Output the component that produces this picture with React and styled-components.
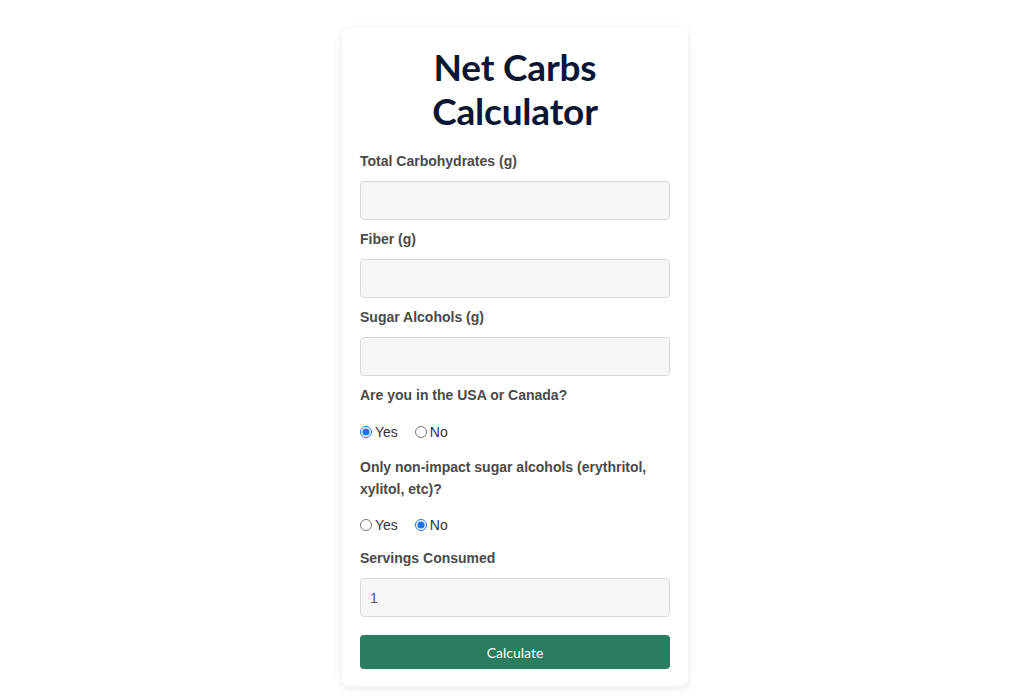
import React, { useState } from 'react'
import styled, { createGlobalStyle } from 'styled-components'

const GlobalStyle = createGlobalStyle`
  html, body {
    margin: 0;
    padding: 0;
    background: #ffffff;
  }
  body {
    font-family: "Liberation Sans", Arial, sans-serif;
  }
`

const Page = styled.div`
  display: flex;
  justify-content: center;
  padding: 28px 0 12px 6px;
`

const Card = styled.div`
  width: 346px;
  box-sizing: border-box;
  padding: 17px 18px 17px;
  background: #fff;
  border-radius: 8px;
  box-shadow: 0 2px 10px rgba(0, 0, 0, 0.1);
`

const Title = styled.h1`
  margin: 0 0 17px;
  text-align: center;
  font-family: Lato, "Open Sans", sans-serif;
  font-weight: 700;
  font-size: 37px;
  line-height: 44px;
  color: #0a1633;
  letter-spacing: -0.2px;
`

const Label = styled.label`
  display: block;
  margin-bottom: 9px;
  font-size: 14px;
  font-weight: 700;
  line-height: 22px;
  color: #4a4a4a;
`

const Input = styled.input`
  display: block;
  width: 100%;
  box-sizing: border-box;
  height: 39px;
  margin: 0 0 8px;
  padding: 0 9px;
  border: 1px solid #d9d9d9;
  border-radius: 4px;
  background: #f6f6f6;
  font-family: "Liberation Sans", Arial, sans-serif;
  font-size: 14px;
  color: #555;
  outline: none;
`

const RadioRow = styled.div`
  display: flex;
  align-items: center;
  gap: 17px;
  height: 22px;
  margin: ${p => p.$top}px 0 ${p => p.$bottom}px;
`

const RadioOption = styled.label`
  display: flex;
  align-items: center;
  font-size: 14px;
  color: #333;
  cursor: pointer;

  input {
    width: 12px;
    height: 12px;
    margin: 0 3px 0 0;
    accent-color: #1a73e8;
  }
`

const Button = styled.button`
  display: block;
  width: 100%;
  height: 34px;
  margin-top: 18px;
  border: none;
  border-radius: 4px;
  background: #2a7d5f;
  color: #fff;
  font-family: Lato, "Open Sans", sans-serif;
  font-size: 14px;
  cursor: pointer;
`

function RadioGroup({ name, value, onChange, top, bottom }) {
  return (
    <RadioRow $top={top} $bottom={bottom}>
      <RadioOption>
        <input type="radio" name={name} checked={value === 'yes'} onChange={() => onChange('yes')} />
        Yes
      </RadioOption>
      <RadioOption>
        <input type="radio" name={name} checked={value === 'no'} onChange={() => onChange('no')} />
        No
      </RadioOption>
    </RadioRow>
  )
}

export default function App() {
  const [usa, setUsa] = useState('yes')
  const [nonImpact, setNonImpact] = useState('no')
  const [servings, setServings] = useState('1')

  return (
    <>
      <GlobalStyle />
      <Page>
        <Card>
          <Title>Net Carbs<br />Calculator</Title>

          <Label>Total Carbohydrates (g)</Label>
          <Input type="text" />

          <Label>Fiber (g)</Label>
          <Input type="text" />

          <Label>Sugar Alcohols (g)</Label>
          <Input type="text" />

          <Label>Are you in the USA or Canada?</Label>
          <RadioGroup name="usa" value={usa} onChange={setUsa} top={15} bottom={13} />

          <Label>Only non-impact sugar alcohols (erythritol, xylitol, etc)?</Label>
          <RadioGroup name="nonimpact" value={nonImpact} onChange={setNonImpact} top={14} bottom={11} />

          <Label>Servings Consumed</Label>
          <Input type="text" value={servings} onChange={e => setServings(e.target.value)} />

          <Button>Calculate</Button>
        </Card>
      </Page>
    </>
  )
}
